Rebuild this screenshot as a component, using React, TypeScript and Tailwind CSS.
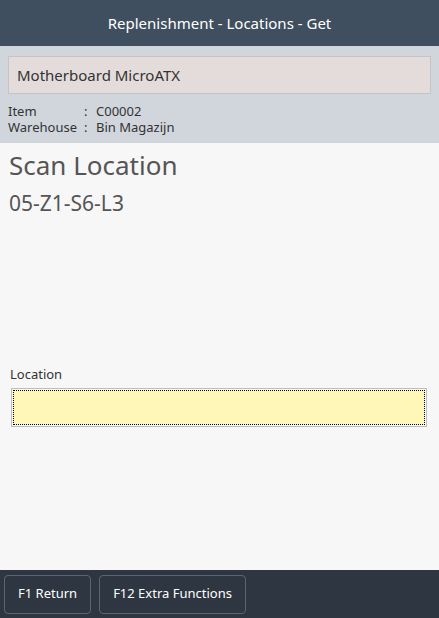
export default function App() {
  return (
    <div className="flex h-[618px] w-[439px] flex-col bg-[#f7f7f7] font-['Noto_Sans',sans-serif] text-[#333]">
      {/* Header */}
      <div className="flex h-[46px] shrink-0 items-center justify-center bg-[#3f4f60] text-[15px] text-white">
        Replenishment - Locations - Get
      </div>

      {/* Item info */}
      <div className="shrink-0 bg-[#d1d6dd] px-2 pb-2 pt-[10px]">
        <div className="flex h-[38px] items-center border border-[#c4c4c4] bg-[#e4dcda] px-2 text-[15px] text-[#333]">
          Motherboard MicroATX
        </div>
        <div className="mt-[9px] grid grid-cols-[76px_12px_1fr] text-[13px] leading-[16px] text-[#333]">
          <span>Item</span>
          <span>:</span>
          <span>C00002</span>
          <span>Warehouse</span>
          <span>:</span>
          <span>Bin Magazijn</span>
        </div>
      </div>

      {/* Body */}
      <div className="flex flex-1 flex-col px-[9px]">
        <h1 className="mt-[6px] text-[26px] leading-[32px] text-[#555]">Scan Location</h1>
        <p className="mt-[10px] text-[21px] leading-[24px] text-[#555]">05-Z1-S6-L3</p>
        <label className="ml-[1px] mt-[150px] text-[13px] text-[#333]">Location</label>
        <div className="ml-[2px] mr-[3px] mt-[3px] h-[39px] border border-[#bdbdbd] p-[1px]">
          <input className="h-full w-full border border-dotted border-black bg-[#fff7b8] outline-none" />
        </div>
      </div>

      {/* Footer */}
      <div className="flex h-[48px] shrink-0 items-center gap-2 bg-[#2d3641] px-1">
        <button className="h-[39px] rounded border border-[#5a6574] px-[13px] text-[13px] text-white">F1 Return</button>
        <button className="h-[39px] rounded border border-[#5a6574] px-[13px] text-[13px] text-white">
          F12 Extra Functions
        </button>
      </div>
    </div>
  );
}
